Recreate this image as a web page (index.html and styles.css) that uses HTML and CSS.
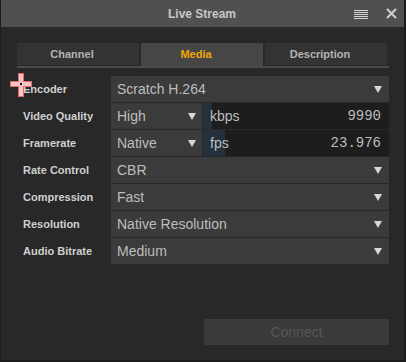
FILE: index.html
```html
<!DOCTYPE html>
<html>
<head>
    <title>Live Stream</title>
    <link rel="stylesheet" href="styles.css">
</head>
<body>
    <div class="window">
        <div class="titlebar">
            <span></span>
            <span class="title">Live Stream</span>
            <div class="title-icons">
                <svg class="icon-menu" width="14" height="9" viewBox="0 0 14 9">
                    <rect x="0" y="0" width="14" height="1"/>
                    <rect x="0" y="2" width="14" height="1"/>
                    <rect x="0" y="4" width="14" height="1"/>
                    <rect x="0" y="6" width="14" height="1"/>
                    <rect x="0" y="8" width="14" height="1"/>
                </svg>
                <svg class="icon-close" width="11" height="11" viewBox="0 0 11 11">
                    <path d="M1 1 L10 10 M10 1 L1 10"/>
                </svg>
            </div>
        </div>

        <div class="content">
            <div class="tabs">
                <div class="tab">Channel</div>
                <div class="tab active">Media</div>
                <div class="tab">Description</div>
            </div>

            <div class="form">
                <label>Encoder</label>
                <div class="select">Scratch H.264<span class="arrow"></span></div>

                <label>Video Quality</label>
                <div class="split">
                    <div class="select small">High<span class="arrow"></span></div>
                    <div class="spin" style="--fill: 9px">
                        <span>kbps</span><span class="value">9990</span>
                    </div>
                </div>

                <label>Framerate</label>
                <div class="split">
                    <div class="select small">Native<span class="arrow"></span></div>
                    <div class="spin" style="--fill: 22px">
                        <span>fps</span><span class="value">23.976</span>
                    </div>
                </div>

                <label>Rate Control</label>
                <div class="select">CBR<span class="arrow"></span></div>

                <label>Compression</label>
                <div class="select">Fast<span class="arrow"></span></div>

                <label>Resolution</label>
                <div class="select">Native Resolution<span class="arrow"></span></div>

                <label>Audio Bitrate</label>
                <div class="select">Medium<span class="arrow"></span></div>
            </div>

            <div class="footer">
                <button disabled>Connect</button>
            </div>
        </div>
    </div>

    <!-- mouse cursor -->
    <svg class="cursor" width="24" height="24" viewBox="0 0 24 24">
        <rect x="8" y="0" width="6" height="24" fill="#e06a6a"/>
        <rect x="0" y="8" width="22" height="6" fill="#e06a6a"/>
        <rect x="9" y="1" width="4" height="22" fill="#f6c4c4"/>
        <rect x="1" y="9" width="20" height="4" fill="#f6c4c4"/>
        <rect x="10" y="10" width="2" height="2" fill="#111"/>
    </svg>
</body>
</html>
```

FILE: styles.css
```css
body {
    margin: 0;
    background: #1c1c1c;
    font-family: "Liberation Sans", Arial, sans-serif;
}

.window {
    width: 403px;
    height: 360px;
    margin-left: 1px;
    background: #282828;
    display: flex;
    flex-direction: column;
}

.titlebar {
    height: 27px;
    background: #505050;
    display: grid;
    grid-template-columns: 1fr auto 1fr;
    align-items: center;
}

.title {
    color: #c8c8c8;
    font-size: 12px;
    font-weight: bold;
    padding-right: 1px;
}

.title-icons {
    display: flex;
    justify-content: flex-end;
    align-items: center;
    gap: 18px;
    padding-right: 7px;
}

.icon-menu {
    fill: #d4d4d4;
    margin-top: 1px;
}

.icon-close {
    stroke: #cfcfcf;
    stroke-width: 2;
}

.content {
    flex: 1;
    display: flex;
    flex-direction: column;
    padding: 16px 15px 15px 16px;
}

.tabs {
    display: flex;
    gap: 2px;
    padding-right: 2px;
    border-bottom: 2px solid #4b4b4b;
    align-items: flex-start;
}

.tab {
    flex: 1;
    height: 22px;
    line-height: 22px;
    margin-bottom: 1px;
    padding-right: 12px;
    background: #333333;
    color: #b4b4b4;
    font-size: 11px;
    font-weight: bold;
    text-align: center;
}

.tab.active {
    height: 23px;
    margin-bottom: 0;
    background: #464646;
    color: #f2a600;
}

.form {
    display: grid;
    grid-template-columns: 94px 1fr;
    grid-auto-rows: 26px;
    row-gap: 1px;
    margin-top: 8px;
}

.form label {
    display: flex;
    align-items: center;
    padding-left: 6px;
    color: #d0d0d0;
    font-size: 11px;
    font-weight: bold;
}

.select {
    display: flex;
    align-items: center;
    justify-content: space-between;
    padding: 0 7px 0 6px;
    background: #3b3b3b;
    color: #bdbdbd;
    font-size: 14px;
}

.select.small {
    width: 91px;
    box-sizing: border-box;
    padding-right: 6px;
}

.arrow {
    width: 0;
    height: 0;
    border-left: 4px solid transparent;
    border-right: 4px solid transparent;
    border-top: 7px solid #d8d8d8;
    margin-top: 1px;
}

.split {
    display: flex;
    gap: 1px;
}

.spin {
    flex: 1;
    display: flex;
    align-items: center;
    justify-content: space-between;
    padding: 0 8px 0 7px;
    background: linear-gradient(#24313c, #24313c) no-repeat, #1d1d1d;
    background-size: var(--fill) 100%;
    color: #bdbdbd;
    font-size: 14px;
}

.spin .value {
    font-family: "Liberation Mono", "DejaVu Sans Mono", monospace;
}

.footer {
    margin-top: auto;
    display: flex;
    justify-content: flex-end;
}

button {
    width: 185px;
    height: 26px;
    border: none;
    background: #3a3a3a;
    color: #575757;
    font-family: "Liberation Sans", Arial, sans-serif;
    font-size: 14px;
}

.cursor {
    position: absolute;
    left: 10px;
    top: 73px;
}
```
